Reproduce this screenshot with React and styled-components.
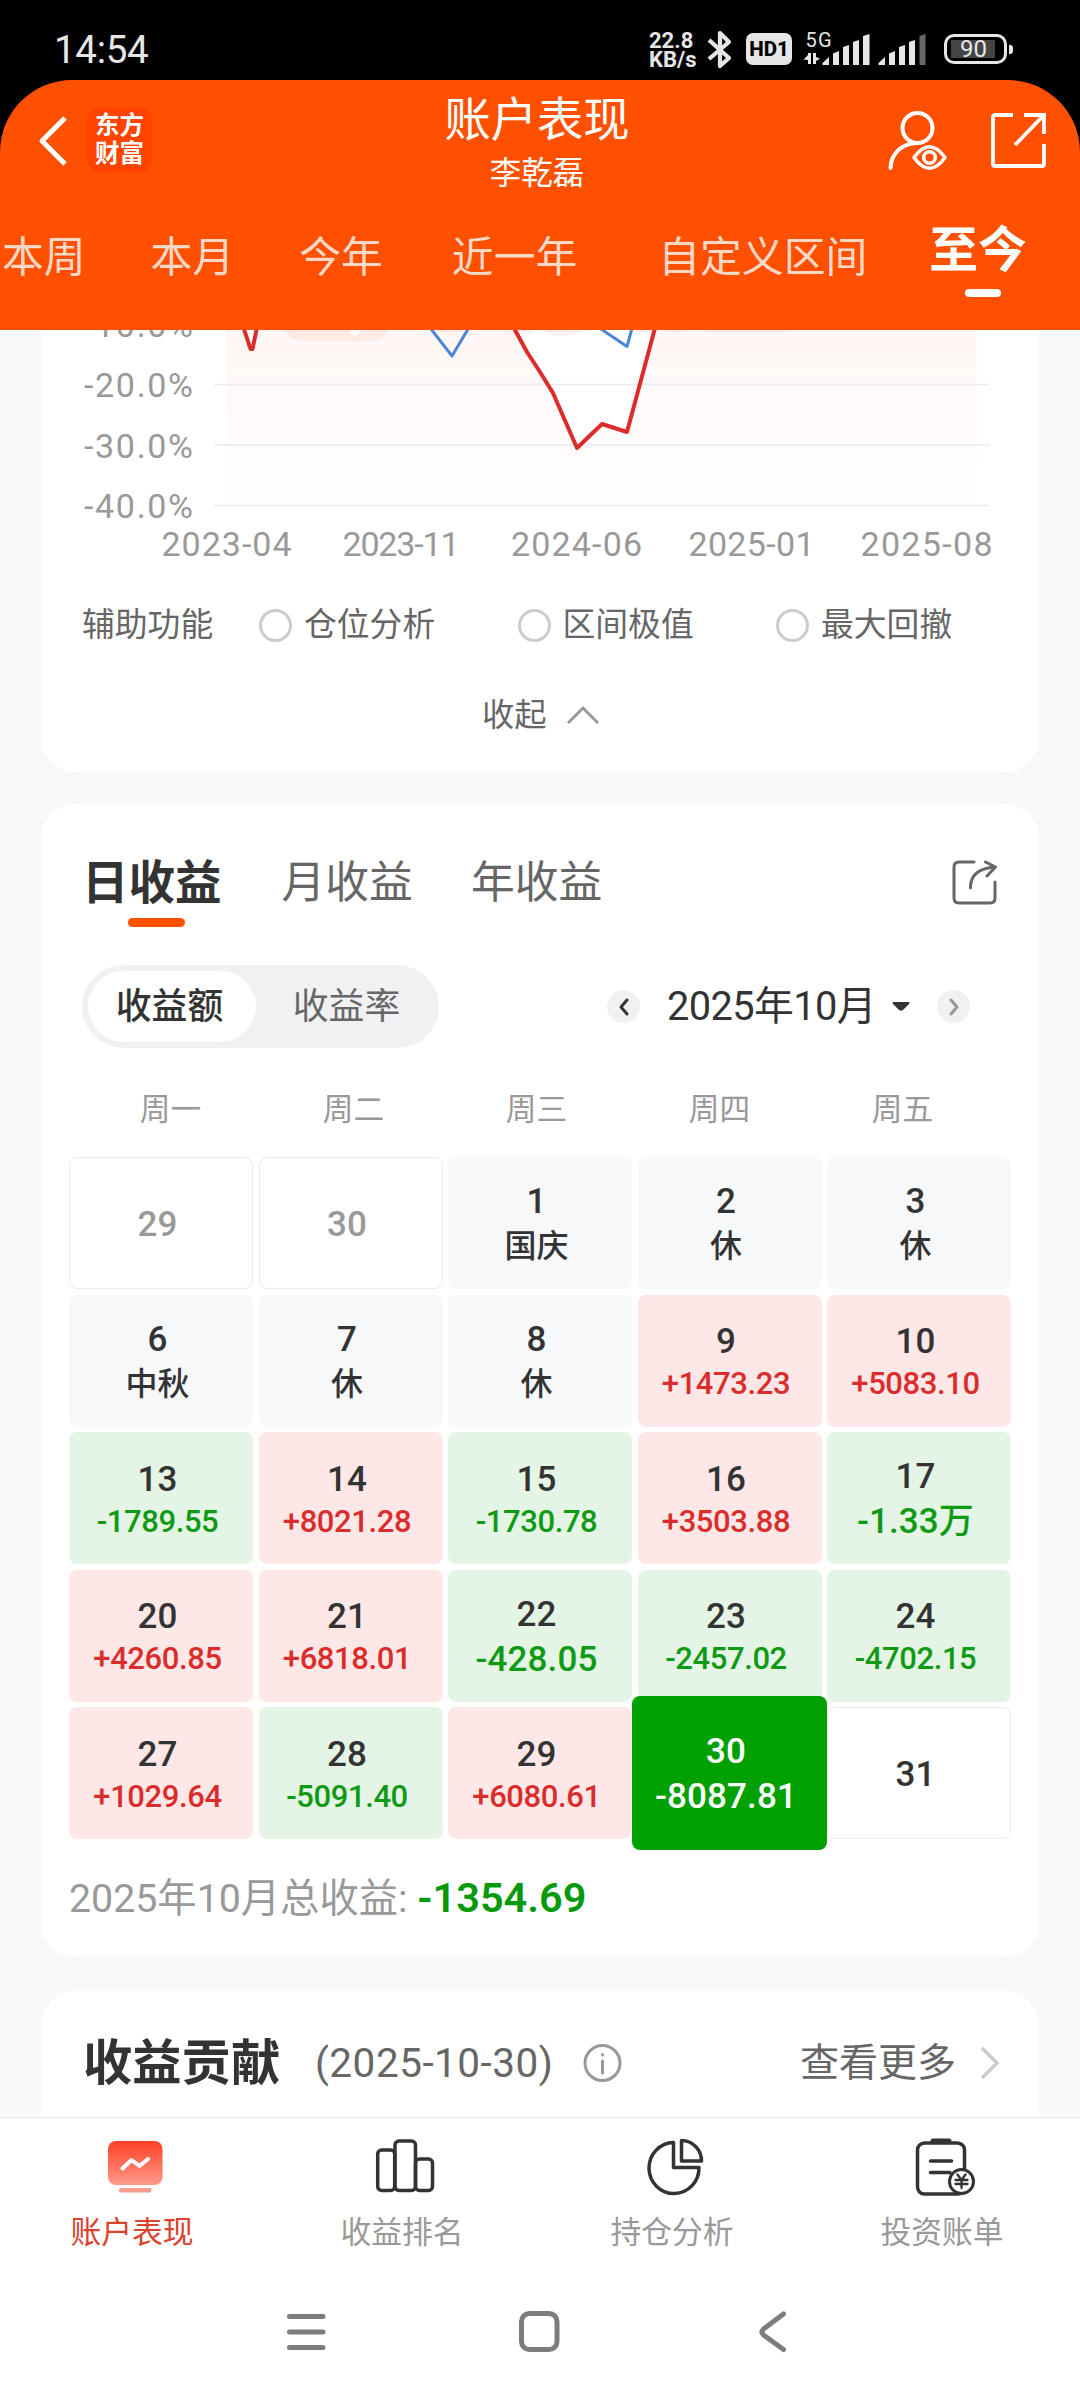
import styled, { createGlobalStyle, css } from 'styled-components'

const colors = {
  primary: '#ff5000',
  page: '#f6f8fa',
  text: '#333333',
  sub: '#666666',
  muted: '#999999',
  up: '#db2c2c',
  down: '#0f9a14',
  upBg: '#fde8e7',
  downBg: '#e4f4e5',
  status: '#e6e6e6',
}

const GlobalStyle = createGlobalStyle`
  * {
    box-sizing: border-box;
  }
  body {
    margin: 0;
    font-family: Roboto, 'Noto Sans CJK SC', sans-serif;
    color: ${colors.text};
  }
  svg {
    display: block;
    flex-shrink: 0;
  }
`

const Screen = styled.div`
  display: flex;
  flex-direction: column;
  width: 1080px;
  height: 2400px;
  overflow: hidden;
  background: ${colors.page};
`

/* status bar */

const Top = styled.div`
  flex-shrink: 0;
  background: #000;
`

const StatusBar = styled.div`
  display: flex;
  align-items: flex-start;
  height: 80px;
  padding: 30px 67px 0 54px;
  color: ${colors.status};
`

const Clock = styled.div`
  flex: 1;
  font-size: 38.5px;
  line-height: 40px;
  letter-spacing: -0.3px;
`

const NetSpeed = styled.div`
  width: 58px;
  font-size: 22px;
  font-weight: 700;
  line-height: 18.5px;
  padding-top: 2px;
`

const HdBadge = styled.div`
  width: 46px;
  height: 32px;
  margin: 3px 11px 0 13px;
  border-radius: 7px;
  background: ${colors.status};
  color: #000;
  font-size: 20.5px;
  font-weight: 800;
  line-height: 33px;
  text-align: center;
`

const Battery = styled.div`
  display: flex;
  align-items: center;
  margin: 4px 0 0 18px;
`

const BatteryBody = styled.div`
  width: 63px;
  height: 30px;
  padding: 3px 4px;
  border: 3px solid ${colors.status};
  border-radius: 10px;
`

const BatteryLevel = styled.div`
  width: 44px;
  height: 18px;
  background: #444;
  font-size: 24px;
  line-height: 19px;
  text-indent: 9px;
  white-space: nowrap;
`

const BatteryTip = styled.div`
  width: 4px;
  height: 9px;
  margin-left: 2px;
  border-radius: 0 3px 3px 0;
  background: ${colors.status};
`

/* header */

const Header = styled.header`
  height: 250px;
  border-radius: 72px 72px 0 0;
  background: ${colors.primary};
  color: #fff;
  overflow: hidden;
`

const NavRow = styled.div`
  display: grid;
  grid-template-columns: 1fr auto 1fr;
  height: 122px;
  padding: 0 34px 0 28px;
`

const NavLeft = styled.div`
  display: flex;
  align-items: flex-start;
  padding: 27px 0 0 10px;
`

const Logo = styled.div`
  width: 65px;
  height: 66px;
  margin-left: 20px;
  padding-top: 5px;
  border-radius: 14px;
  background: #ff4400;
  font-size: 24.5px;
  font-weight: 700;
  line-height: 28px;
  text-align: center;
`

const TitleBox = styled.div`
  padding-top: 14px;
  text-align: center;
`

const Title = styled.div`
  font-size: 46.3px;
  line-height: 52px;
`

const Owner = styled.div`
  margin-top: 10px;
  font-size: 31.5px;
  line-height: 36px;
`

const NavRight = styled.div`
  display: flex;
  justify-content: flex-end;
  gap: 42px;
  padding-top: 31px;
`

const RangeTabs = styled.nav`
  display: flex;
  height: 128px;
  padding-left: 2px;
`

const RangeTab = styled.div`
  flex-shrink: 0;
  margin-right: ${(props) => props.$gap}px;
  padding-top: 31px;
  font-size: 41.8px;
  line-height: 50px;
  color: rgba(255, 255, 255, 0.78);
  ${(props) =>
    props.$active &&
    css`
      padding-top: 24px;
      font-size: 48.8px;
      font-weight: 700;
      color: #fff;
      &::after {
        content: '';
        display: block;
        width: 36px;
        height: 8px;
        margin: 13px 0 0 36px;
        border-radius: 4px;
        background: #fff;
      }
    `}
`

/* cards */

const Content = styled.main`
  flex: 1;
  display: flex;
  flex-direction: column;
  padding: 0 41px;
  overflow: hidden;
`

const ChartCard = styled.section`
  flex-shrink: 0;
  height: 442px;
  border-radius: 0 0 34px 34px;
  background: #fff;
`

const Card = styled.section`
  flex-shrink: 0;
  border-radius: 34px;
  background: #fff;
`

const ToolRow = styled.div`
  display: flex;
  align-items: center;
  height: 50px;
  margin-top: 30px;
  padding-left: 41px;
  font-size: 32.8px;
  line-height: 50px;
  color: ${colors.sub};
`

const ToolTitle = styled.div`
  width: 177px;
`

const Tool = styled.div`
  display: flex;
  align-items: center;
  width: 258.5px;
  gap: 12px;
`

const Radio = styled.span`
  width: 33px;
  height: 33px;
  border: 3px solid #ccc;
  border-radius: 50%;
`

const Collapse = styled.div`
  display: flex;
  align-items: center;
  gap: 20px;
  margin-top: 39px;
  padding-left: 441px;
  font-size: 32.3px;
  line-height: 52px;
  color: ${colors.sub};
`

const CalendarCard = styled(Card)`
  height: 1153px;
  margin-top: 32px;
  padding: 0 28px;
`

const ProfitTabs = styled.div`
  display: flex;
  align-items: flex-start;
  height: 161px;
  padding: 50px 13px 0;
`

const ProfitTab = styled.div`
  margin-right: 58px;
  padding-top: 2px;
  font-size: 43.8px;
  line-height: 54px;
  color: ${colors.sub};
  ${(props) =>
    props.$active &&
    css`
      margin-right: 60px;
      font-size: 46.5px;
      font-weight: 700;
      color: ${colors.text};
      &::after {
        content: '';
        display: block;
        width: 57px;
        height: 9px;
        margin: 8px 0 0 46px;
        border-radius: 5px;
        background: ${colors.primary};
      }
    `}
`

const ShareSlot = styled.div`
  margin: 6px 1px 0 auto;
`

const FilterRow = styled.div`
  display: flex;
  align-items: center;
  height: 83px;
  padding: 0 41px 0 13px;
`

const Segment = styled.div`
  display: flex;
  width: 357px;
  height: 83px;
  padding: 6px;
  border-radius: 42px;
  background: #f1f1f3;
`

const SegmentItem = styled.div`
  flex: 0 0 ${(props) => (props.$active ? 168 : 181)}px;
  padding-top: 1px;
  border-radius: 36px;
  font-size: 35.8px;
  line-height: 70px;
  text-align: center;
  color: ${colors.sub};
  ${(props) =>
    props.$active &&
    css`
      padding-right: 5px;
      background: #fff;
      color: ${colors.text};
      font-weight: 500;
    `}
`

const RoundButton = styled.div`
  display: flex;
  align-items: center;
  justify-content: center;
  width: 33px;
  height: 33px;
  border-radius: 50%;
  background: #f1f1f3;
  color: ${(props) => (props.$disabled ? colors.muted : colors.text)};
`

const MonthPicker = styled.div`
  display: flex;
  align-items: center;
  justify-content: space-between;
  width: 363px;
  margin-left: auto;
`

const Month = styled.div`
  display: flex;
  align-items: center;
  gap: 16px;
  font-size: 39.8px;
  line-height: 50px;
  letter-spacing: -0.6px;
  white-space: nowrap;
`

const WeekRow = styled.div`
  display: grid;
  grid-template-columns: repeat(5, 183px);
  height: 109px;
  padding: 37px 0 0 10px;
  font-size: 30.7px;
  line-height: 50px;
  text-align: center;
  color: ${colors.muted};
`

const DayGrid = styled.div`
  display: grid;
  grid-template-columns: repeat(5, 184px);
  grid-auto-rows: 132px;
  gap: 5.5px;
`

const cellTone = {
  out: css`
    border: 1px solid #ececec;
    color: ${colors.muted};
  `,
  plain: css`
    border: 1px solid #ececec;
  `,
  rest: css`
    background: #f7f8fa;
  `,
  up: css`
    background: ${colors.upBg};
  `,
  down: css`
    background: ${colors.downBg};
  `,
  selected: css`
    z-index: 1;
    margin: -11px -5.5px;
    background: #00a000;
    color: #fff;
  `,
}

const Day = styled.div`
  display: flex;
  flex-direction: column;
  align-items: center;
  justify-content: center;
  padding: 3px 7px 0 0;
  border-radius: 8px;
  font-size: 35px;
  font-weight: 500;
  line-height: 44px;
  ${(props) => cellTone[props.$tone]}
`

const Amount = styled.div`
  font-size: ${(props) => (props.$large ? 35 : 31)}px;
  line-height: ${(props) => (props.$large ? 45 : 40)}px;
  letter-spacing: ${(props) => (props.$large ? 0.1 : -0.4)}px;
  color: ${(props) =>
    ({ up: colors.up, down: colors.down, selected: '#fff' })[props.$tone]};
`

const Holiday = styled.div`
  font-size: 32px;
  line-height: 45px;
`

const Total = styled.div`
  height: 118px;
  padding-top: 29px;
  font-size: 39.3px;
  line-height: 60px;
  color: ${colors.muted};
`

const TotalValue = styled.span`
  font-size: 41.5px;
  font-weight: 600;
  color: #06990a;
`

const ContributionCard = styled(Card)`
  display: flex;
  align-items: center;
  height: 300px;
  margin-top: 34px;
  padding: 0 40px 156px 42px;
`

const CardTitle = styled.div`
  width: 232px;
  font-size: 49.3px;
  font-weight: 700;
  line-height: 60px;
`

const CardDate = styled.div`
  width: 268px;
  font-size: 40.5px;
  letter-spacing: 0.5px;
  line-height: 60px;
  color: ${colors.sub};
`

const More = styled.div`
  display: flex;
  align-items: center;
  gap: 24px;
  margin-left: auto;
  font-size: 39px;
  line-height: 60px;
  color: ${colors.sub};
`

/* bottom */

const TabBar = styled.footer`
  display: grid;
  grid-template-columns: repeat(4, 1fr);
  flex-shrink: 0;
  height: 163px;
  border-top: 1px solid #e4e6e8;
  background: #fff;
`

const TabItem = styled.div`
  display: flex;
  flex-direction: column;
  align-items: center;
  padding-top: 18px;
  font-size: 30.8px;
  line-height: 36px;
  color: ${(props) => (props.$active ? '#da432d' : colors.muted)};
`

const TabLabel = styled.div`
  margin-top: 19px;
  padding-right: 6px;
`

const SystemNav = styled.div`
  display: flex;
  flex-shrink: 0;
  gap: 190px;
  height: 120px;
  padding: 30px 0 0 285px;
  background: #fff;
`

const ranges = [
  { label: '本周', gap: 65 },
  { label: '本月', gap: 65 },
  { label: '今年', gap: 69 },
  { label: '近一年', gap: 81 },
  { label: '自定义区间', gap: 62 },
  { label: '至今', gap: 0, active: true },
]

const tools = ['仓位分析', '区间极值', '最大回撤']

const weekdays = ['周一', '周二', '周三', '周四', '周五']

const days = [
  { day: 29, tone: 'out' },
  { day: 30, tone: 'out' },
  { day: 1, tone: 'rest', holiday: '国庆' },
  { day: 2, tone: 'rest', holiday: '休' },
  { day: 3, tone: 'rest', holiday: '休' },
  { day: 6, tone: 'rest', holiday: '中秋' },
  { day: 7, tone: 'rest', holiday: '休' },
  { day: 8, tone: 'rest', holiday: '休' },
  { day: 9, tone: 'up', amount: '+1473.23' },
  { day: 10, tone: 'up', amount: '+5083.10' },
  { day: 13, tone: 'down', amount: '-1789.55' },
  { day: 14, tone: 'up', amount: '+8021.28' },
  { day: 15, tone: 'down', amount: '-1730.78' },
  { day: 16, tone: 'up', amount: '+3503.88' },
  { day: 17, tone: 'down', amount: '-1.33万', large: true },
  { day: 20, tone: 'up', amount: '+4260.85' },
  { day: 21, tone: 'up', amount: '+6818.01' },
  { day: 22, tone: 'down', amount: '-428.05', large: true },
  { day: 23, tone: 'down', amount: '-2457.02' },
  { day: 24, tone: 'down', amount: '-4702.15' },
  { day: 27, tone: 'up', amount: '+1029.64' },
  { day: 28, tone: 'down', amount: '-5091.40' },
  { day: 29, tone: 'up', amount: '+6080.61' },
  { day: 30, tone: 'selected', amount: '-8087.81', large: true },
  { day: 31, tone: 'plain' },
]

const yLabels = [
  { text: '-10.0%', y: 7 },
  { text: '-20.0%', y: 67 },
  { text: '-30.0%', y: 128 },
  { text: '-40.0%', y: 188 },
]

const xLabels = [
  { text: '2023-04', x: 185.5, w: 130 },
  { text: '2023-11', x: 360, w: 117 },
  { text: '2024-06', x: 535.5, w: 131 },
  { text: '2025-01', x: 710.5, w: 126 },
  { text: '2025-08', x: 885.5, w: 132 },
]

function Bluetooth() {
  return (
    <svg width="26" height="40" viewBox="0 0 26 40" fill="none" stroke={colors.status} strokeWidth="4.2" strokeLinejoin="round">
      <path d="M2 10 L22 28 L13 36 V3 L22 12 L2 29" />
    </svg>
  )
}

function Signals() {
  return (
    <svg width="123" height="40" viewBox="0 0 123 40" fill={colors.status} overflow="visible">
      <text x="2.5" y="17" fontSize="20" textLength="26">5G</text>
      <path d="M8 23 V34 H5 V30 L0.5 29.5 L5 25 V23 Z M10 23 H13 V27 L17 28.5 L13 31 V34 H10 Z" />
      <path d="M19.500 33 L26 27 V35 H19.500 Z M30 23.500 L36 21 V35 H30 Z M40 17 L46 15 V35 H40 Z M50 12 L56 10 V35 H50 Z M60 6 L66.500 4 V35 H60 Z" />
      <path d="M75.500 33 L82 27 V35 H75.500 Z M86 23.500 L92 21 V35 H86 Z M96 17 L102 15 V35 H96 Z M106 12 L112 10 V35 H106 Z" />
      <path d="M116.500 6 L122.500 4 V35 H116.500 Z" fill="#666" />
    </svg>
  )
}

function ReturnChart() {
  return (
    <svg width="998" height="240" viewBox="0 0 998 240">
      <defs>
        <linearGradient id="area" x1="0" y1="0" x2="0" y2="1">
          <stop offset="0" stopColor="#fff7f6" />
          <stop offset="1" stopColor="#fffefe" />
        </linearGradient>
      </defs>
      <path
        d="M185 0 H203.500 L210.500 20 L215 0 H474 L486 22 L499 42 L512 63 L536 118 L561 94 L586 102 L616 0 H936 V172 H185 Z"
        fill="url(#area)"
      />
      <g fill="#fdeae4">
        <path d="M243 0 Q250 11 262 11 H330 Q342 11 348 0 Z" />
        <path d="M393 0 Q403 5 412 5 Q419 4 420 0 Z M462 5 L466 0 H491 L488 4 Z" opacity="0.7" />
        <path d="M500 0 Q520 12 541 0 Z M592 0 Q602 6 618 0 Z M622 0 Q635 7 648 0 Z M664 0 H748 L740 3 H664 Z" opacity="0.7" />
      </g>
      <path d="M308 0 L314 7 L321 0 Z" fill="#fff" />
      <g stroke="#e9ebee" strokeWidth="1.500">
        <path d="M173 54.500 H949 M173 115 H949 M173 175.500 H949" />
      </g>
      <g fill="none" strokeLinejoin="round">
        <path d="M383 -10 L411 26 L433 -11 M548 -9 L586 16.500 L593 -9" stroke="#4b84d8" strokeWidth="3" />
        <path
          d="M200 -10 L209.500 19 H211.500 L218 -12 M468 -11 L486 22 L499 42 L512 63 L536 118 L561 94 L586 102 L617 -13"
          stroke="#dc2b2b"
          strokeWidth="4"
        />
      </g>
      <g fill={colors.muted} fontSize="34">
        {yLabels.map((label) => (
          <text key={label.text} x="152" y={label.y} textAnchor="end" textLength="109">
            {label.text}
          </text>
        ))}
        {xLabels.map((label) => (
          <text key={label.text} x={label.x} y="226" textAnchor="middle" textLength={label.w}>
            {label.text}
          </text>
        ))}
      </g>
    </svg>
  )
}

function Chevron({ w, h, points, width }) {
  return (
    <svg width={w} height={h} fill="none" stroke="currentColor" strokeWidth={width} strokeLinecap="round" strokeLinejoin="round">
      <polyline points={points} />
    </svg>
  )
}

function App() {
  return (
    <Screen>
      <GlobalStyle />
      <Top>
        <StatusBar>
          <Clock>14:54</Clock>
          <NetSpeed>
            22.8
            <br />
            KB/s
          </NetSpeed>
          <Bluetooth />
          <HdBadge>HD1</HdBadge>
          <Signals />
          <Battery>
            <BatteryBody>
              <BatteryLevel>90</BatteryLevel>
            </BatteryBody>
            <BatteryTip />
          </Battery>
        </StatusBar>
        <Header>
          <NavRow>
            <NavLeft>
              <svg width="29" height="66" fill="none" stroke="#fff" strokeWidth="5" strokeLinejoin="round">
                <path d="M27 11 L4 34 L27 57" />
              </svg>
              <Logo>
                东方
                <br />
                财富
              </Logo>
            </NavLeft>
            <TitleBox>
              <Title>账户表现</Title>
              <Owner>李乾磊</Owner>
            </TitleBox>
            <NavRight>
              <svg width="61" height="60" fill="none" stroke="#fff" strokeWidth="4" strokeLinecap="round">
                <circle cx="29.500" cy="17" r="15" />
                <path d="M28 32 C13 33 3 43 2.500 57" />
                <path d="M26 46.500 Q41.500 25 57 46.500 Q41.500 68 26 46.500 Z" strokeWidth="3.500" strokeLinejoin="round" />
                <circle cx="41.500" cy="46.500" r="5.800" strokeWidth="3.500" />
              </svg>
              <svg width="55" height="60" fill="none" stroke="#fff" strokeWidth="3.800">
                <path d="M22 4 H4 Q2 4 2 6 V53 Q2 55 4 55 H51 Q53 55 53 53 V33" />
                <path d="M33 4 H53 V23 M52 5 L24 34" />
              </svg>
            </NavRight>
          </NavRow>
          <RangeTabs>
            {ranges.map((range) => (
              <RangeTab key={range.label} $gap={range.gap} $active={range.active}>
                {range.label}
              </RangeTab>
            ))}
          </RangeTabs>
        </Header>
      </Top>

      <Content>
        <ChartCard>
          <ReturnChart />
          <ToolRow>
            <ToolTitle>辅助功能</ToolTitle>
            {tools.map((tool) => (
              <Tool key={tool}>
                <Radio />
                {tool}
              </Tool>
            ))}
          </ToolRow>
          <Collapse>
            收起
            <svg width="32" height="20" fill="none" stroke="#999" strokeWidth="3">
              <path d="M1 18 L16 3 L31 18" />
            </svg>
          </Collapse>
        </ChartCard>

        <CalendarCard>
          <ProfitTabs>
            <ProfitTab $active>日收益</ProfitTab>
            <ProfitTab>月收益</ProfitTab>
            <ProfitTab>年收益</ProfitTab>
            <ShareSlot>
              <svg width="45" height="46" fill="none" stroke="#666" strokeWidth="3" strokeLinecap="round" strokeLinejoin="round">
                <path d="M22 2 H7 Q2 2 2 7 V38 Q2 43 7 43 H38 Q43 43 43 38 V22" />
                <path d="M18.500 28 Q18 9 43 7 M33.500 2 L43.500 7 L35 16" />
              </svg>
            </ShareSlot>
          </ProfitTabs>
          <FilterRow>
            <Segment>
              <SegmentItem $active>收益额</SegmentItem>
              <SegmentItem>收益率</SegmentItem>
            </Segment>
            <MonthPicker>
              <RoundButton>
                <Chevron w="12" h="20" points="9,3 3,10 9,17" width="3" />
              </RoundButton>
              <Month>
                2025年10月
                <svg width="18" height="10" fill="#333">
                  <path d="M1 0 H17 Q18 1 17 2 L11 8 Q9 9.500 7 8 L1 2 Q0 1 1 0 Z" />
                </svg>
              </Month>
              <RoundButton $disabled>
                <Chevron w="12" h="20" points="3,3 9,10 3,17" width="3" />
              </RoundButton>
            </MonthPicker>
          </FilterRow>
          <WeekRow>
            {weekdays.map((weekday) => (
              <div key={weekday}>{weekday}</div>
            ))}
          </WeekRow>
          <DayGrid>
            {days.map((item, index) => (
              <Day key={index} $tone={item.tone}>
                {item.day}
                {item.holiday && <Holiday>{item.holiday}</Holiday>}
                {item.amount && (
                  <Amount $tone={item.tone} $large={item.large}>
                    {item.amount}
                  </Amount>
                )}
              </Day>
            ))}
          </DayGrid>
          <Total>
            2025年10月总收益: <TotalValue>-1354.69</TotalValue>
          </Total>
        </CalendarCard>

        <ContributionCard>
          <CardTitle>收益贡献</CardTitle>
          <CardDate>(2025-10-30)</CardDate>
          <svg width="39" height="40" fill="none" stroke="#999" strokeWidth="3" strokeLinecap="round">
            <circle cx="19.500" cy="20" r="17.500" />
            <path d="M19.500 18 V30 M19.500 11.500 V12" />
          </svg>
          <More>
            查看更多
            <svg width="19" height="34" fill="none" stroke="#ccc" strokeWidth="3.500">
              <path d="M2 2 L17 17 L2 32" />
            </svg>
          </More>
        </ContributionCard>
      </Content>

      <TabBar>
        <TabItem $active>
          <svg width="60" height="60" fill="none">
            <defs>
              <linearGradient id="monitor" x1="0" y1="0" x2="0" y2="1">
                <stop offset="0" stopColor="#ff4027" />
                <stop offset="1" stopColor="#ff9a8a" />
              </linearGradient>
            </defs>
            <rect x="3" y="5" width="54.500" height="44" rx="8" fill="url(#monitor)" />
            <rect x="14" y="52" width="32.500" height="4.500" rx="2" fill="#f79c8e" />
            <path d="M17.500 32.500 L26.500 24 L34.500 30 L43 23" stroke="#fff" strokeWidth="4" strokeLinecap="round" strokeLinejoin="round" />
          </svg>
          <TabLabel>账户表现</TabLabel>
        </TabItem>
        <TabItem>
          <svg width="60" height="60" fill="none" stroke="#333" strokeWidth="3.500">
            <rect x="2.700" y="14" width="17" height="40.500" rx="4" />
            <rect x="20" y="5" width="20.500" height="49.500" rx="4" />
            <rect x="40.500" y="23" width="17" height="31.500" rx="4" />
          </svg>
          <TabLabel>收益排名</TabLabel>
        </TabItem>
        <TabItem>
          <svg width="60" height="60" fill="none" stroke="#333" strokeWidth="3.500" strokeLinejoin="round">
            <path d="M28.500 6.500 A25 25.500 0 1 0 54 31.500 H28.500 Z" />
            <path d="M36.500 4.500 V25 H56.500 A20 20.500 0 0 0 36.500 4.500 Z" />
          </svg>
          <TabLabel>持仓分析</TabLabel>
        </TabItem>
        <TabItem>
          <svg width="60" height="60" fill="none" stroke="#333" strokeWidth="3.500" strokeLinecap="round">
            <rect x="2.500" y="7" width="47" height="51" rx="7" />
            <path d="M18 5 H34" strokeWidth="5" />
            <path d="M15.500 25 H36.500 M15.500 36.500 H35" />
            <circle cx="46.500" cy="45.500" r="12" fill="#fff" strokeWidth="3" />
            <path d="M42.500 38.500 L46.500 44 L50.500 38.500 M46.500 44 V52 M40.500 44 H52.500 M40.500 48 H52.500" strokeWidth="2.300" />
          </svg>
          <TabLabel>投资账单</TabLabel>
        </TabItem>
      </TabBar>

      <SystemNav>
        <svg width="42" height="44" fill="none" stroke="#7d7d7d" strokeWidth="5" strokeLinecap="round">
          <path d="M4.500 6.500 H38 M4.500 22 H38 M4.500 37.500 H38" />
        </svg>
        <svg width="46" height="44" fill="none" stroke="#7d7d7d" strokeWidth="5">
          <rect x="4.500" y="3.500" width="35.500" height="36" rx="8" />
        </svg>
        <svg width="42" height="44" fill="none" stroke="#7d7d7d" strokeWidth="5" strokeLinecap="round" strokeLinejoin="round">
          <path d="M30.500 4 L10.500 19 Q7.500 22 10.500 25 L30.500 39.500" />
        </svg>
      </SystemNav>
    </Screen>
  )
}

export default App
